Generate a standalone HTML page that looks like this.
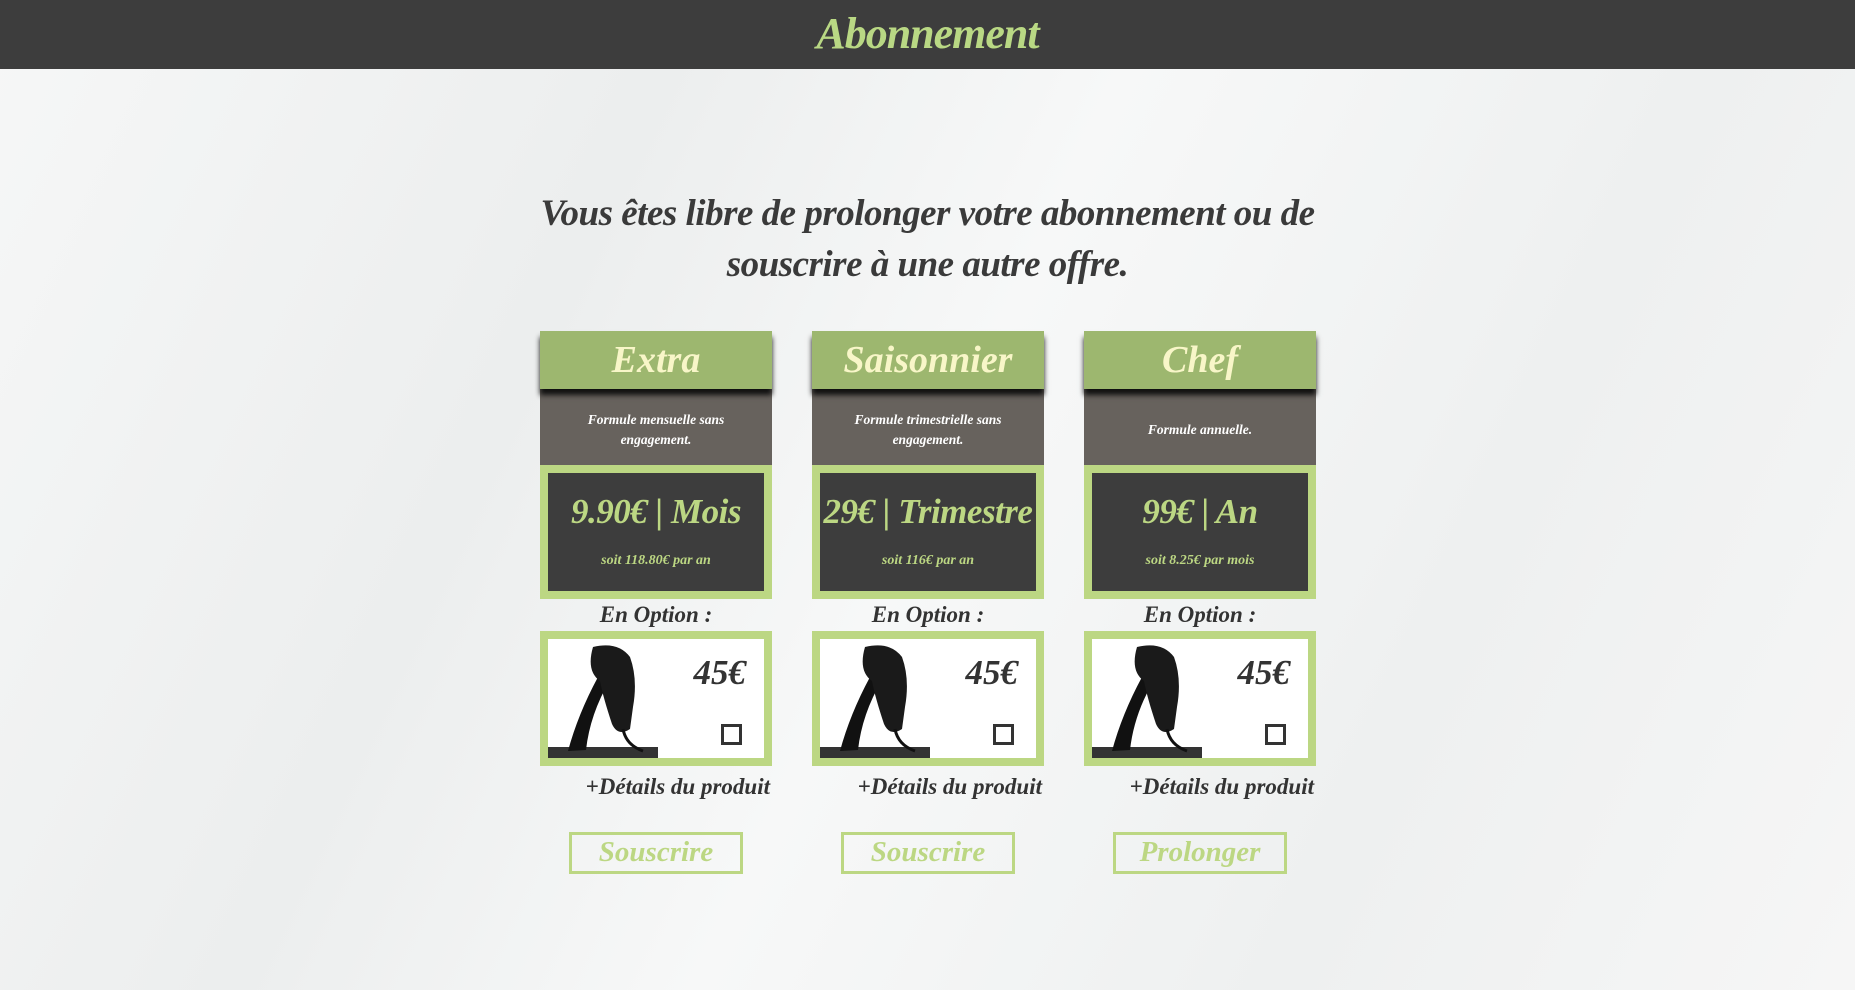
<!DOCTYPE html>
<html><head><meta charset="utf-8"><style>
*{margin:0;padding:0;box-sizing:border-box}
body{width:1855px;height:990px;overflow:hidden;background:#f1f2f2;font-family:"Liberation Serif",serif;font-style:italic;font-weight:bold;position:relative}
.bg{position:absolute;inset:0;background:linear-gradient(115deg,#f6f7f7 0%,#eceeee 30%,#f7f8f8 50%,#eef0f0 75%,#f6f6f6 100%)}
.top{position:absolute;left:0;top:0;width:1855px;height:69px;background:#3d3d3d;text-align:center;color:#b9d884;font-size:44px;line-height:68px;letter-spacing:-1px}
.h{position:absolute;left:0;width:1855px;text-align:center;color:#3a3a3a;font-size:37px;letter-spacing:-0.5px}
.card{position:absolute;top:331px;width:232px}
.hd{height:58px;background:#9db76f;color:#f8f6c8;text-align:center;font-size:38px;line-height:58px;box-shadow:0 6px 5px #111;position:relative;z-index:2}
.gr{height:76px;background:#67625d;color:#fff;font-size:13.5px;text-align:center;display:flex;align-items:center;justify-content:center;padding:6px 30px 0;line-height:20px}
.pr{height:134px;background:#bcd783;padding:8px}
.pr>div{background:#3d3d3d;height:118px;text-align:center;color:#bcd783}
.pr .p{font-size:35px;line-height:78px;letter-spacing:-0.5px}
.pr .s{font-size:14px;line-height:20px}
.op{text-align:center;color:#333;font-size:23px;height:32px;line-height:32px}
.ob{height:135px;background:#bcd783;padding:8px;position:relative}
.ob .in{background:#fff;height:119px;position:relative}
.ob .im{position:absolute;left:0;top:0;width:110px;height:119px}
.ob .e{position:absolute;right:18px;top:14px;font-size:35px;color:#333}
.ob .cb{position:absolute;left:173px;top:85px;width:21px;height:21px;border:3px solid #333}
.dt{text-align:right;color:#333;font-size:23px;margin-top:8px;padding-right:2px}
.bt{position:absolute;top:501px;left:29px;width:174px;height:42px;border:3px solid #bcd783;color:#bcd783;text-align:center;font-size:29px;line-height:35px}
</style></head><body>
<div class="bg"></div>
<div class="top">Abonnement</div>
<div class="h" style="top:192px">Vous êtes libre de prolonger votre abonnement ou de</div>
<div class="h" style="top:243px">souscrire à une autre offre.</div>

<div class="card" style="left:540px">
<div class="hd">Extra</div>
<div class="gr">Formule mensuelle sans engagement.</div>
<div class="pr"><div><div class="p">9.90€ | Mois</div><div class="s">soit 118.80€ par an</div></div></div>
<div class="op">En Option :</div>
<div class="ob"><div class="in"><svg class="im" viewBox="0 0 110 119"><rect x="0" y="108" width="110" height="11" fill="#333"/><path d="M20 112 Q30 75 50 38 L62 41 Q42 75 38 111Z" fill="#111"/><path d="M45 8 Q70 2 82 18 Q90 40 85 68 L82 90 Q70 98 64 85 Q55 58 52 42 Q38 32 45 8Z" fill="#1a1a1a"/><path d="M75 90 Q78 106 95 112" stroke="#111" stroke-width="3" fill="none"/></svg><div class="e">45€</div><div class="cb"></div></div></div>
<div class="dt">+Détails du produit</div>
<div class="bt">Souscrire</div>
</div>

<div class="card" style="left:812px">
<div class="hd">Saisonnier</div>
<div class="gr">Formule trimestrielle sans engagement.</div>
<div class="pr"><div><div class="p">29€ | Trimestre</div><div class="s">soit 116€ par an</div></div></div>
<div class="op">En Option :</div>
<div class="ob"><div class="in"><svg class="im" viewBox="0 0 110 119"><rect x="0" y="108" width="110" height="11" fill="#333"/><path d="M20 112 Q30 75 50 38 L62 41 Q42 75 38 111Z" fill="#111"/><path d="M45 8 Q70 2 82 18 Q90 40 85 68 L82 90 Q70 98 64 85 Q55 58 52 42 Q38 32 45 8Z" fill="#1a1a1a"/><path d="M75 90 Q78 106 95 112" stroke="#111" stroke-width="3" fill="none"/></svg><div class="e">45€</div><div class="cb"></div></div></div>
<div class="dt">+Détails du produit</div>
<div class="bt">Souscrire</div>
</div>

<div class="card" style="left:1084px">
<div class="hd">Chef</div>
<div class="gr">Formule annuelle.</div>
<div class="pr"><div><div class="p">99€ | An</div><div class="s">soit 8.25€ par mois</div></div></div>
<div class="op">En Option :</div>
<div class="ob"><div class="in"><svg class="im" viewBox="0 0 110 119"><rect x="0" y="108" width="110" height="11" fill="#333"/><path d="M20 112 Q30 75 50 38 L62 41 Q42 75 38 111Z" fill="#111"/><path d="M45 8 Q70 2 82 18 Q90 40 85 68 L82 90 Q70 98 64 85 Q55 58 52 42 Q38 32 45 8Z" fill="#1a1a1a"/><path d="M75 90 Q78 106 95 112" stroke="#111" stroke-width="3" fill="none"/></svg><div class="e">45€</div><div class="cb"></div></div></div>
<div class="dt">+Détails du produit</div>
<div class="bt">Prolonger</div>
</div>
</body></html>
